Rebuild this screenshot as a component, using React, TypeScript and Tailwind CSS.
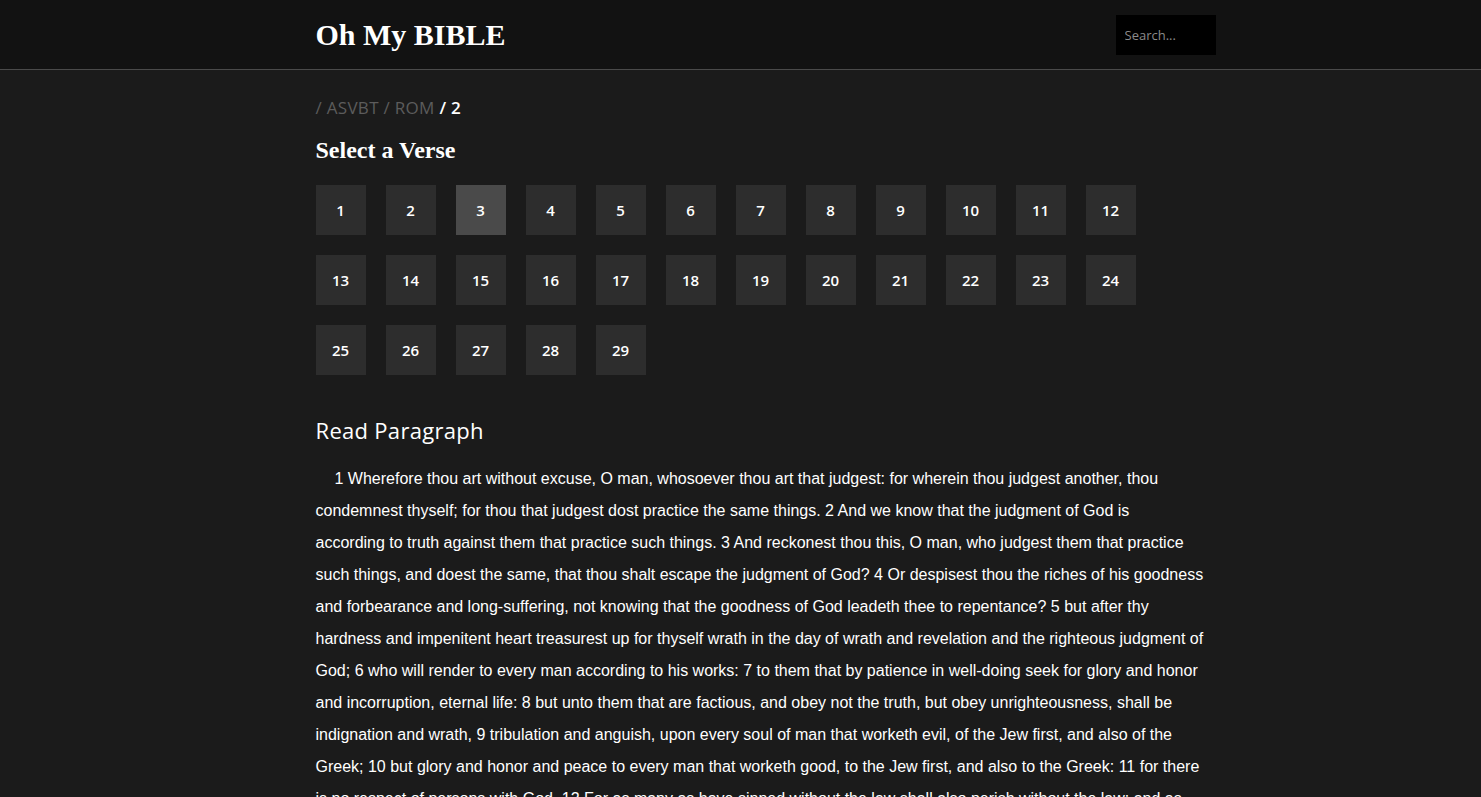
import React from 'react';

// Romans 2 (ASV), laid out in the same lines as the page shows them
const lines: string[] = [
  '1 Wherefore thou art without excuse, O man, whosoever thou art that judgest: for wherein thou judgest another, thou',
  'condemnest thyself; for thou that judgest dost practice the same things. 2 And we know that the judgment of God is',
  'according to truth against them that practice such things. 3 And reckonest thou this, O man, who judgest them that practice',
  'such things, and doest the same, that thou shalt escape the judgment of God? 4 Or despisest thou the riches of his goodness',
  'and forbearance and long-suffering, not knowing that the goodness of God leadeth thee to repentance? 5 but after thy',
  'hardness and impenitent heart treasurest up for thyself wrath in the day of wrath and revelation and the righteous judgment of',
  'God; 6 who will render to every man according to his works: 7 to them that by patience in well-doing seek for glory and honor',
  'and incorruption, eternal life: 8 but unto them that are factious, and obey not the truth, but obey unrighteousness, shall be',
  'indignation and wrath, 9 tribulation and anguish, upon every soul of man that worketh evil, of the Jew first, and also of the',
  'Greek; 10 but glory and honor and peace to every man that worketh good, to the Jew first, and also to the Greek: 11 for there',
  'is no respect of persons with God. 12 For as many as have sinned without the law shall also perish without the law: and as',
];

const rest =
  'many as have sinned under the law shall be judged by the law; 13 for not the hearers of the law are just before God, but the doers of the law shall be justified: 14 (for when Gentiles that have not the law do by nature the things of the law, these, not having the law, are the law unto themselves; 15 in that they show the work of the law written in their hearts, their conscience bearing witness therewith, and their thoughts one with another accusing or else excusing them); 16 in the day when God shall judge the secrets of men, according to my gospel, by Jesus Christ. 17 But if thou bearest the name of a Jew, and restest upon the law, and gloriest in God, 18 and knowest his will, and approvest the things that are excellent, being instructed out of the law, 19 and art confident that thou thyself art a guide of the blind, a light of them that are in darkness, 20 a corrector of the foolish, a teacher of babes, having in the law the form of knowledge and of the truth; 21 thou therefore that teachest another, teachest thou not thyself? thou that preachest a man should not steal, dost thou steal? 22 thou that sayest a man should not commit adultery, dost thou commit adultery? thou that abhorrest idols, dost thou rob temples? 23 thou who gloriest in the law, through thy transgression of the law dishonorest thou God? 24 For the name of God is blasphemed among the Gentiles because of you, even as it is written. 25 For circumcision indeed profiteth, if thou be a doer of the law: but if thou be a transgressor of the law, thy circumcision is become uncircumcision. 26 If therefore the uncircumcision keep the ordinances of the law, shall not his uncircumcision be reckoned for circumcision? 27 and shall not the uncircumcision which is by nature, if it fulfil the law, judge thee, who with the letter and circumcision art a transgressor of the law? 28 For he is not a Jew who is one outwardly; neither is that circumcision which is outward in the flesh: 29 but he is a Jew who is one inwardly; and circumcision is that of the heart, in the spirit not in the letter; whose praise is not of men, but of God.';

const serif = "font-['Liberation_Serif',serif]";
const sans = "font-['Open_Sans',sans-serif]";

export default function App() {
  const selected = 3;

  return (
    <div className="min-h-screen bg-[#1b1b1b] text-white">
      {/* Header */}
      <header className="bg-[#121212] border-b border-[#4a4a4a]">
        <div className="w-[950px] mx-auto pl-[50px] h-[69px] flex items-center justify-between">
          <div className={`${serif} font-bold text-[30px] leading-none`}>Oh My BIBLE</div>
          <input
            placeholder="Search..."
            className={`${sans} w-[100px] h-[40px] bg-black px-[9px] text-[13px] text-white placeholder:text-[#8a8a8a] outline-none`}
          />
        </div>
      </header>

      <main className="w-[950px] mx-auto pl-[50px] pt-[28px]">
        {/* Breadcrumb */}
        <div className={`${sans} text-[17px] leading-[20px] tracking-[0.3px]`}>
          <span className="text-[#5c5c5c]">/ ASVBT / ROM </span>
          <span className="text-white font-semibold">/ 2</span>
        </div>

        <h2 className={`${serif} font-bold text-[24px] leading-[32px] mt-[16px]`}>Select a Verse</h2>

        {/* Verse grid */}
        <div className="grid grid-cols-[repeat(12,50px)] gap-[20px] mt-[19px]">
          {Array.from({ length: 29 }, (_, i) => i + 1).map((n) => (
            <button
              key={n}
              className={`${sans} w-[50px] h-[50px] flex items-center justify-center text-[15px] font-semibold text-white ${
                n === selected ? 'bg-[#4a4a4a]' : 'bg-[#2d2d2d]'
              }`}
            >
              {n}
            </button>
          ))}
        </div>

        <h3 className={`${sans} text-[22px] leading-[30px] font-medium tracking-[0.3px] mt-[40px]`}>Read Paragraph</h3>

        <p className="font-['Liberation_Sans',Arial,sans-serif] text-[16px] leading-[32px] mt-[18px] pb-10">
          {lines.map((l, i) => (
            <span key={i} className={`block whitespace-nowrap ${i === 0 ? 'pl-[19px]' : ''}`}>
              {l}
            </span>
          ))}
          <span>{rest}</span>
        </p>
      </main>
    </div>
  );
}
